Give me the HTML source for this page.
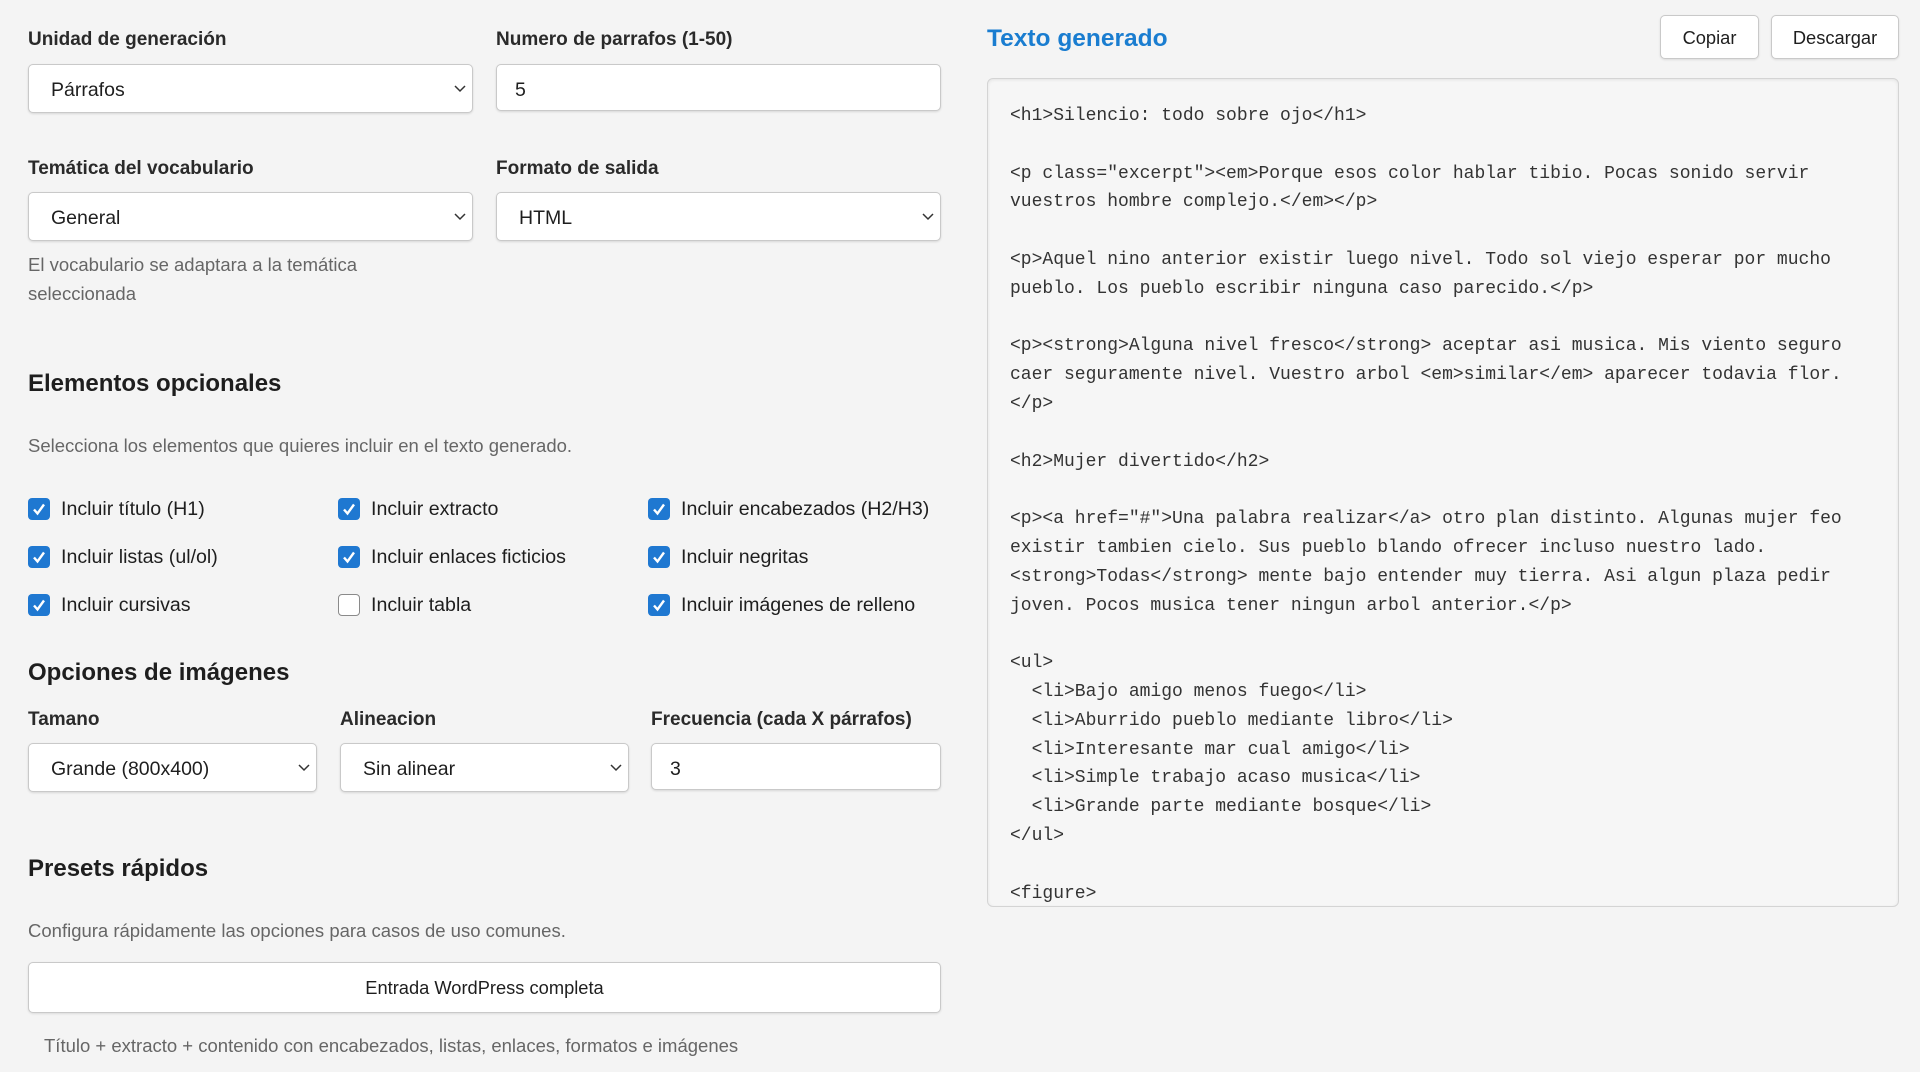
<!DOCTYPE html>
<html><head><meta charset="utf-8"><style>
*{box-sizing:border-box;margin:0;padding:0}
body{width:1920px;height:1072px;background:#f4f4f4;font-family:"Liberation Sans",Arial,sans-serif;color:#1e1e1e;position:relative;overflow:hidden}
.a{position:absolute}
.lbl{font-size:19px;font-weight:bold;color:#2a2a2a;line-height:22px}
.sel,.inp{position:absolute;background:#fff;border:1px solid #c9c9c9;border-radius:5px;box-shadow:0 1px 2px rgba(0,0,0,.12);font-size:19.5px;line-height:22px;padding:14px 0 0 22px;color:#1e1e1e}
.inp{padding-left:18px}
.sel svg{position:absolute;right:6px;top:50%;margin-top:-4px}
h2{position:absolute;font-size:24px;font-weight:bold;color:#1e1e1e;line-height:28px}
.help{position:absolute;font-size:18.5px;color:#666;line-height:29px}
.cb{position:absolute;font-size:19.6px;line-height:22px;padding-left:33px}
.cb i{position:absolute;left:0;top:0;width:22px;height:22px;border-radius:4px;background:#1f78d1}
.cb i.off{background:#fff;border:1px solid #8a8a8a}
.cb i svg{position:absolute;left:4px;top:4px}
.btn{position:absolute;background:#fff;border:1px solid #c9c9c9;border-radius:5px;box-shadow:0 1px 2px rgba(0,0,0,.1);font-size:18.3px;text-align:center;color:#1e1e1e}
pre{position:absolute;left:987px;top:78px;width:912px;height:829px;background:#f6f6f6;border:1px solid #d4d4d4;border-radius:6px;box-shadow:inset 0 1px 3px rgba(0,0,0,.08);font-family:"Liberation Mono","Courier New",monospace;font-size:18px;line-height:28.8px;color:#333;padding:23px 0 0 22px;overflow:hidden;white-space:pre}
</style></head><body>
<div class="a lbl" style="left:28px;top:29px">Unidad de generación</div>
<div class="a lbl" style="left:496px;top:29px">Numero de parrafos (1-50)</div>
<div class="sel" style="left:28px;top:64px;width:445px;height:49px">Párrafos<svg width="12" height="8"><path d="M1 1l5 5 5-5" fill="none" stroke="#333" stroke-width="1.5"/></svg></div>
<div class="inp" style="left:496px;top:64px;width:445px;height:47px">5</div>
<div class="a lbl" style="left:28px;top:158px">Temática del vocabulario</div>
<div class="a lbl" style="left:496px;top:158px">Formato de salida</div>
<div class="sel" style="left:28px;top:192px;width:445px;height:49px">General<svg width="12" height="8"><path d="M1 1l5 5 5-5" fill="none" stroke="#333" stroke-width="1.5"/></svg></div>
<div class="sel" style="left:496px;top:192px;width:445px;height:49px">HTML<svg width="12" height="8"><path d="M1 1l5 5 5-5" fill="none" stroke="#333" stroke-width="1.5"/></svg></div>
<div class="help" style="left:28px;top:250px">El vocabulario se adaptara a la temática<br>seleccionada</div>
<h2 style="left:28px;top:370px">Elementos opcionales</h2>
<div class="help" style="left:28px;top:431px">Selecciona los elementos que quieres incluir en el texto generado.</div>

<div class="cb" style="left:28px;top:498px"><i><svg width="14" height="14"><path d="M2 7.5l3.5 4L12 2.5" fill="none" stroke="#fff" stroke-width="2.4"/></svg></i>Incluir título (H1)</div>
<div class="cb" style="left:338px;top:498px"><i><svg width="14" height="14"><path d="M2 7.5l3.5 4L12 2.5" fill="none" stroke="#fff" stroke-width="2.4"/></svg></i>Incluir extracto</div>
<div class="cb" style="left:648px;top:498px"><i><svg width="14" height="14"><path d="M2 7.5l3.5 4L12 2.5" fill="none" stroke="#fff" stroke-width="2.4"/></svg></i>Incluir encabezados (H2/H3)</div>
<div class="cb" style="left:28px;top:546px"><i><svg width="14" height="14"><path d="M2 7.5l3.5 4L12 2.5" fill="none" stroke="#fff" stroke-width="2.4"/></svg></i>Incluir listas (ul/ol)</div>
<div class="cb" style="left:338px;top:546px"><i><svg width="14" height="14"><path d="M2 7.5l3.5 4L12 2.5" fill="none" stroke="#fff" stroke-width="2.4"/></svg></i>Incluir enlaces ficticios</div>
<div class="cb" style="left:648px;top:546px"><i><svg width="14" height="14"><path d="M2 7.5l3.5 4L12 2.5" fill="none" stroke="#fff" stroke-width="2.4"/></svg></i>Incluir negritas</div>
<div class="cb" style="left:28px;top:594px"><i><svg width="14" height="14"><path d="M2 7.5l3.5 4L12 2.5" fill="none" stroke="#fff" stroke-width="2.4"/></svg></i>Incluir cursivas</div>
<div class="cb" style="left:338px;top:594px"><i class="off"></i>Incluir tabla</div>
<div class="cb" style="left:648px;top:594px"><i><svg width="14" height="14"><path d="M2 7.5l3.5 4L12 2.5" fill="none" stroke="#fff" stroke-width="2.4"/></svg></i>Incluir imágenes de relleno</div>

<h2 style="left:28px;top:659px">Opciones de imágenes</h2>
<div class="a lbl" style="left:28px;top:709px">Tamano</div>
<div class="a lbl" style="left:340px;top:709px">Alineacion</div>
<div class="a lbl" style="left:651px;top:709px">Frecuencia (cada X párrafos)</div>
<div class="sel" style="left:28px;top:743px;width:289px;height:49px">Grande (800x400)<svg width="12" height="8"><path d="M1 1l5 5 5-5" fill="none" stroke="#333" stroke-width="1.5"/></svg></div>
<div class="sel" style="left:340px;top:743px;width:289px;height:49px">Sin alinear<svg width="12" height="8"><path d="M1 1l5 5 5-5" fill="none" stroke="#333" stroke-width="1.5"/></svg></div>
<div class="inp" style="left:651px;top:743px;width:290px;height:47px">3</div>

<h2 style="left:28px;top:855px">Presets rápidos</h2>
<div class="help" style="left:28px;top:916px">Configura rápidamente las opciones para casos de uso comunes.</div>
<div class="btn" style="left:28px;top:962px;width:913px;height:51px;line-height:50px">Entrada WordPress completa</div>
<div class="help" style="left:44px;top:1031px">Título + extracto + contenido con encabezados, listas, enlaces, formatos e imágenes</div>

<div class="a" style="left:987px;top:24px;font-size:24.5px;font-weight:bold;color:#1a7dd0;line-height:30px">Texto generado</div>
<div class="btn" style="left:1660px;top:15px;width:99px;height:44px;line-height:43px">Copiar</div>
<div class="btn" style="left:1771px;top:15px;width:128px;height:44px;line-height:43px">Descargar</div>
<pre>&lt;h1&gt;Silencio: todo sobre ojo&lt;/h1&gt;

&lt;p class="excerpt"&gt;&lt;em&gt;Porque esos color hablar tibio. Pocas sonido servir
vuestros hombre complejo.&lt;/em&gt;&lt;/p&gt;

&lt;p&gt;Aquel nino anterior existir luego nivel. Todo sol viejo esperar por mucho
pueblo. Los pueblo escribir ninguna caso parecido.&lt;/p&gt;

&lt;p&gt;&lt;strong&gt;Alguna nivel fresco&lt;/strong&gt; aceptar asi musica. Mis viento seguro
caer seguramente nivel. Vuestro arbol &lt;em&gt;similar&lt;/em&gt; aparecer todavia flor.
&lt;/p&gt;

&lt;h2&gt;Mujer divertido&lt;/h2&gt;

&lt;p&gt;&lt;a href="#"&gt;Una palabra realizar&lt;/a&gt; otro plan distinto. Algunas mujer feo
existir tambien cielo. Sus pueblo blando ofrecer incluso nuestro lado.
&lt;strong&gt;Todas&lt;/strong&gt; mente bajo entender muy tierra. Asi algun plaza pedir
joven. Pocos musica tener ningun arbol anterior.&lt;/p&gt;

&lt;ul&gt;
  &lt;li&gt;Bajo amigo menos fuego&lt;/li&gt;
  &lt;li&gt;Aburrido pueblo mediante libro&lt;/li&gt;
  &lt;li&gt;Interesante mar cual amigo&lt;/li&gt;
  &lt;li&gt;Simple trabajo acaso musica&lt;/li&gt;
  &lt;li&gt;Grande parte mediante bosque&lt;/li&gt;
&lt;/ul&gt;

&lt;figure&gt;</pre>
</body></html>
